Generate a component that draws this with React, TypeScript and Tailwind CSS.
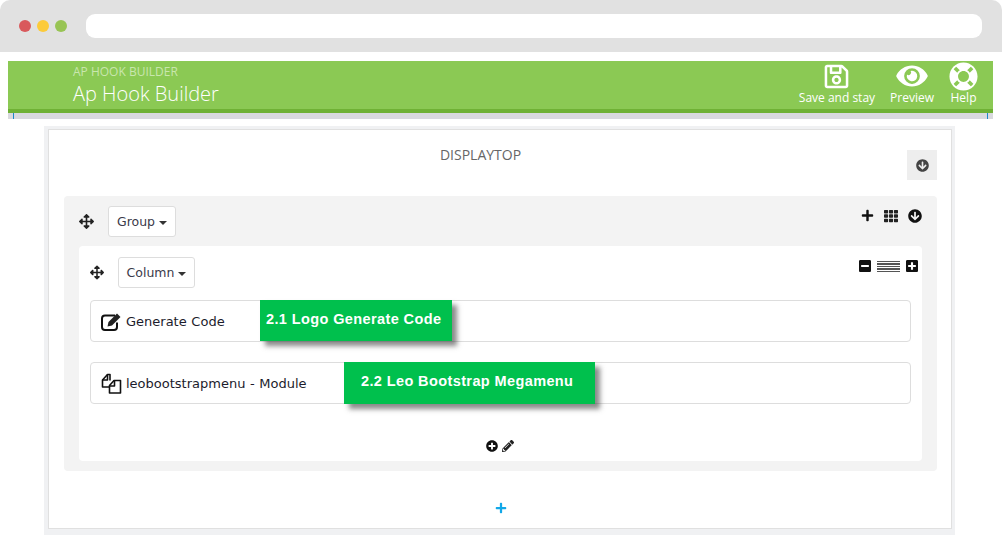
import { ReactNode } from 'react'
import {
  FaArrowsAlt,
  FaPlus,
  FaTh,
  FaArrowCircleDown,
  FaMinusSquare,
  FaPlusSquare,
  FaPlusCircle,
  FaPencilAlt,
  FaRegSave,
  FaEye,
  FaLifeRing,
} from 'react-icons/fa'

function EditIcon() {
  return (
    <svg viewBox="0 0 21 19" className="w-[21px] h-[19px]" fill="none">
      <path d="M14 3.5H4a3 3 0 0 0-3 3V15a3 3 0 0 0 3 3h9a3 3 0 0 0 3-3v-4.5" stroke="#111111" strokeWidth="2" />
      <path d="M16 1.5l3.5 3.5-8.5 8.5-4.5 1 1-4.5z" fill="#222222" />
    </svg>
  )
}

function FilesIcon() {
  return (
    <svg viewBox="0 0 21 21" className="w-[21px] h-[21px]" fill="none" stroke="#111111" strokeWidth="1.6" strokeLinejoin="round">
      <path d="M9 7.5V1.5H6.5L1.5 7v7H8" fill="#ffffff" />
      <path d="M6.5 1.5V7H1.5" />
      <path d="M8.5 12.5L13 7.5h6.5v12.5h-11z" fill="#ffffff" />
      <path d="M13.5 7.5v5.5H8.5" />
    </svg>
  )
}

function ToolbarLink({ icon, label }: { icon: ReactNode; label: string }) {
  return (
    <div className="flex flex-col items-center text-white">
      <div className="h-[30px] flex items-center">{icon}</div>
      <span className="text-[12px] leading-[14px]">{label}</span>
    </div>
  )
}

function DropButton({ label, className }: { label: string; className: string }) {
  return (
    <div className={`h-[31px] flex items-center justify-center gap-[4px] bg-white border border-[#dddddd] rounded-[3px] text-[12.5px] text-[#3a3a4a] ${className}`}>
      <span className="mt-[1px]">{label}</span>
      <span className="mt-[2px] border-x-[4px] border-x-transparent border-t-[4px] border-t-[#333333]" />
    </div>
  )
}

function Row({ icon, label, className }: { icon: ReactNode; label: string; className: string }) {
  return (
    <div className={`h-[42px] flex items-center pl-[10px] gap-[4px] bg-white border border-[#dddddd] rounded-[4px] text-[13px] text-[#1c1c2c] [word-spacing:0.5px] ${className}`}>
      {icon}
      <span className="mt-[1px]">{label}</span>
    </div>
  )
}

export default function App() {
  return (
    <div className="relative w-[1002px] h-[548px] bg-white overflow-hidden font-['DejaVu_Sans',sans-serif]">
      {/* Browser chrome */}
      <div className="h-[52px] bg-[#e1e1e1] rounded-t-[10px] flex items-center pl-[19px] pr-[20px]">
        <div className="flex gap-[6px]">
          <span className="w-[12px] h-[12px] rounded-full bg-[#d9595c]" />
          <span className="w-[12px] h-[12px] rounded-full bg-[#fccb3a]" />
          <span className="w-[12px] h-[12px] rounded-full bg-[#98c454]" />
        </div>
        <div className="ml-[19px] flex-1 h-[24px] bg-white rounded-[9px]" />
      </div>

      {/* Page header */}
      <div className="mt-[9px] ml-[8px] w-[985px]">
        <div className="h-[52px] bg-[#8bc954] border-b-[4px] border-[#6fb135] flex justify-between pl-[65px] pr-[15px] font-['Open_Sans',sans-serif]">
          <div className="text-white">
            <div className="text-[12px] leading-[14px] mt-[4px] text-[#c9e6ae]">AP HOOK BUILDER</div>
            <div className="text-[20px] leading-[27px] mt-[1px] font-light">Ap Hook Builder</div>
          </div>
          <div className="flex gap-[15px]">
            <ToolbarLink icon={<FaRegSave className="w-[25px] h-[27px]" />} label="Save and stay" />
            <ToolbarLink icon={<FaEye className="w-[32px] h-[28px]" />} label="Preview" />
            <ToolbarLink icon={<FaLifeRing className="w-[29px] h-[29px]" />} label="Help" />
          </div>
        </div>
        <div className="relative h-[6px] bg-[#d9d9de]">
          <span className="absolute left-[5px] top-0 w-px h-[6px] bg-[#1e88c9]" />
          <span className="absolute right-[5px] top-0 w-px h-[6px] bg-[#1e88c9]" />
        </div>
      </div>

      {/* Hook panel */}
      <div className="mt-[7px] ml-[44px] w-[911px] h-[409px] bg-[#f0f1f3] pt-[3px] pl-[4px] pr-[3px] pb-[6px]">
        <div className="h-full bg-white border border-[#e0e0e0] pl-[15px] pt-[16px]">
          <div className="relative h-[50px] w-[873px] pr-[40px] text-center text-[14px] leading-[18px] text-[#666666] font-['Open_Sans',sans-serif]">
            DISPLAYTOP
            <div className="absolute right-0 top-[4px] w-[30px] h-[30px] bg-[#eeeeee] flex items-center justify-center">
              <FaArrowCircleDown className="w-[13px] h-[13px] text-[#444444]" />
            </div>
          </div>

          <div className="w-[873px] h-[275px] bg-[#f3f3f3] rounded-[4px] px-[15px] pt-[10px]">
            <div className="flex items-center h-[31px]">
              <FaArrowsAlt className="w-[15px] h-[15px] text-[#222222]" />
              <DropButton label="Group" className="ml-[14px] w-[68px]" />
              <div className="ml-auto flex items-center gap-[9px] mb-[12px]">
                <FaPlus className="w-[13px] h-[13px] text-[#111111]" />
                <FaTh className="w-[16px] h-[14px] text-[#222222]" />
                <FaArrowCircleDown className="w-[14px] h-[14px] text-[#111111]" />
              </div>
            </div>

            <div className="mt-[9px] h-[215px] bg-white rounded-[4px] px-[11px] pt-[11px]">
              <div className="flex items-center h-[31px]">
                <FaArrowsAlt className="w-[14px] h-[15px] text-[#222222]" />
                <DropButton label="Column" className="ml-[14px] w-[77px]" />
                <div className="ml-auto flex items-center gap-[6px] mb-[13px] mr-[-7px]">
                  <FaMinusSquare className="w-[12px] h-[14px] text-[#111111]" />
                  <span className="w-[23px] h-[11px] bg-[repeating-linear-gradient(to_bottom,#555555_0,#555555_1.4px,#ffffff_1.4px,#ffffff_2.4px)]" />
                  <FaPlusSquare className="w-[12px] h-[14px] text-[#111111]" />
                </div>
              </div>
              <Row className="mt-[12px]" icon={<EditIcon />} label="Generate Code" />
              <Row className="mt-[20px]" icon={<FilesIcon />} label="leobootstrapmenu - Module" />
              <div className="mt-[36px] flex justify-center items-center gap-[4px] pr-[2px]">
                <FaPlusCircle className="w-[12px] h-[12px] text-[#111111]" />
                <FaPencilAlt className="w-[12px] h-[12px] text-[#222222]" />
              </div>
            </div>
          </div>

          <div className="mt-[31px] w-[873px] flex justify-center">
            <FaPlus className="w-[12px] h-[12px] text-[#12a8e8]" />
          </div>
        </div>
      </div>

      {/* Annotations */}
      <div className="absolute left-[260px] top-[300px] w-[192px] h-[41px] pl-[6px] pt-[10px] bg-[#00c04d] text-white font-['Liberation_Sans',sans-serif] font-bold text-[14.5px] leading-[18px] tracking-[0.39px] whitespace-nowrap shadow-[5px_5px_5px_rgba(60,60,60,0.6)]">
        2.1 Logo Generate Code
      </div>
      <div className="absolute left-[344px] top-[362px] w-[251px] h-[42px] pl-[17px] pt-[10px] bg-[#00c04d] text-white font-['Liberation_Sans',sans-serif] font-bold text-[14.5px] leading-[18px] tracking-[0.39px] whitespace-nowrap shadow-[5px_5px_5px_rgba(60,60,60,0.6)]">
        2.2 Leo Bootstrap Megamenu
      </div>
    </div>
  )
}
